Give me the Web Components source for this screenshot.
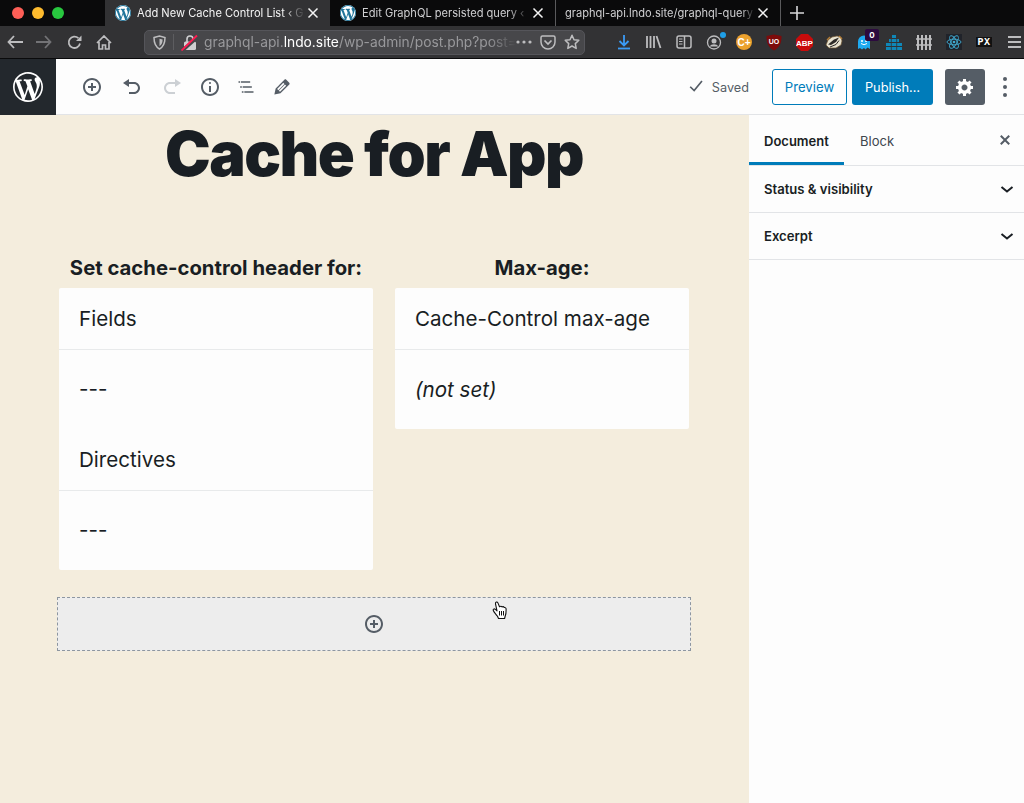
<!DOCTYPE html>
<html>
<head>
<meta charset="utf-8">
<title>Add New Cache Control List</title>
<style>
  html, body { margin: 0; height: 100%; }
  body { width: 1024px; height: 803px; overflow: hidden; font-family: Inter, "Liberation Sans", sans-serif; }
</style>
</head>
<body>
<browser-tabs></browser-tabs>
<browser-toolbar></browser-toolbar>
<editor-shell>
  <editor-header slot="header"></editor-header>
  <editor-canvas slot="canvas">
    <cache-table heading="Set cache-control header for:" slot="left">
      <table-row kind="head">Fields</table-row>
      <table-row>---</table-row>
      <table-row kind="head">Directives</table-row>
      <table-row>---</table-row>
    </cache-table>
    <cache-table heading="Max-age:" slot="right">
      <table-row kind="head">Cache-Control max-age</table-row>
      <table-row style="line-height:79px"><em>(not set)</em></table-row>
    </cache-table>
  </editor-canvas>
  <editor-sidebar slot="sidebar">
    <panel-row>Status &amp; visibility</panel-row>
    <panel-row>Excerpt</panel-row>
  </editor-sidebar>
</editor-shell>
<hand-cursor></hand-cursor>

<script>
const WP_LOGO = "M20 10c0-5.51-4.49-10-10-10C4.48 0 0 4.49 0 10c0 5.52 4.48 10 10 10 5.51 0 10-4.48 10-10zM7.78 15.37L4.37 6.22c.55-.02 1.17-.08 1.17-.08.5-.06.44-1.13-.06-1.11 0 0-1.45.11-2.37.11-.18 0-.37 0-.58-.01C4.12 2.69 6.87 1.11 10 1.11c2.33 0 4.45.87 6.05 2.34-.68-.11-1.65.39-1.65 1.58 0 .74.45 1.36.9 2.1.35.61.55 1.36.55 2.46 0 1.49-1.4 5-1.4 5l-3.03-8.37c.54-.02.82-.17.82-.17.5-.05.44-1.25-.06-1.22 0 0-1.44.12-2.38.12-.87 0-2.33-.12-2.33-.12-.5-.03-.56 1.2-.06 1.22l.92.08 1.26 3.41zM17.41 10c.24-.64.74-1.87.43-4.25.7 1.29 1.05 2.71 1.05 4.25 0 3.29-1.73 6.24-4.4 7.78.97-2.59 1.94-5.2 2.92-7.78zM6.1 18.09C3.12 16.65 1.11 13.53 1.11 10c0-1.3.23-2.48.72-3.59C3.25 10.3 4.67 14.2 6.1 18.09zm4.03-6.63l2.58 6.98c-.86.29-1.76.45-2.71.45-.79 0-1.57-.11-2.29-.33.81-2.38 1.62-4.74 2.42-7.1z";
const INSERT = "M10 1c-5 0-9 4-9 9s4 9 9 9 9-4 9-9-4-9-9-9zm0 16c-3.9 0-7-3.1-7-7s3.1-7 7-7 7 3.1 7 7-3.1 7-7 7zm1-11H9v3H6v2h3v3h2v-3h3V9h-3V6z";
const CLOSE = "M14.95 6.46L11.41 10l3.54 3.54-1.41 1.41L10 11.42l-3.53 3.53-1.42-1.42L8.58 10 5.05 6.47l1.42-1.42L10 8.58l3.54-3.53z";

class browserTabs extends HTMLElement {
  constructor(){
    super();
    this.attachShadow({mode:"open"});
  }
  tab(title, active, width){
    return `
      <div class="tab ${active ? "active" : ""}" style="width:${width}px">
        <svg class="fav" width="16" height="16" viewBox="0 0 20 20"><circle cx="10" cy="10" r="10" fill="#fff"/><path fill="#21759b" d="${WP_LOGO}"/></svg>
        <span class="title">${title}</span>
        <svg class="x" width="12" height="12" viewBox="0 0 12 12"><path d="M1.5 1.5l9 9m0-9l-9 9" stroke="#f4f4f4" stroke-width="1.5" fill="none"/></svg>
      </div>`;
  }
  connectedCallback(){
    this.shadowRoot.innerHTML = `
      <style>
        :host { display:flex; height:26px; background:#0a0a0b; font:400 11.1px Inter, "Liberation Sans", sans-serif; color:#cfcfd1; }
        .lights { width:105px; display:flex; align-items:center; gap:8px; padding-left:12px; box-sizing:border-box; }
        .lights i { width:12px; height:12px; border-radius:50%; display:block; }
        .tab { display:flex; align-items:center; box-sizing:border-box; padding:0 11px 0 10px; }
        .tab.active { background:#323234; color:#f4f4f4; }
        .fav { flex:none; margin-right:6px; }
        .x { flex:none; }
        .title { flex:1; white-space:nowrap; -webkit-mask-image:linear-gradient(90deg,#000 87%,transparent); mask-image:linear-gradient(90deg,#000 87%,transparent); margin-right:2px; }
        .tab.plain { padding-left:9px; border-left:1px solid #5a5a5c; border-right:1px solid #5a5a5c; }
        .plain .title { -webkit-mask-image:linear-gradient(90deg,#000 93%,transparent); mask-image:linear-gradient(90deg,#000 93%,transparent); }
        .plus { width:31px; display:flex; align-items:center; justify-content:center; }
      </style>
      <div class="lights"><i style="background:#fe5f57"></i><i style="background:#febb2e"></i><i style="background:#28c83f"></i></div>
      ${this.tab("Add New Cache Control List ‹ G", true, 225)}
      ${this.tab("Edit GraphQL persisted query ‹", false, 225)}
      <div class="tab plain" style="width:226px">
        <span class="title">graphql-api.lndo.site/graphql-query</span>
        <svg class="x" width="12" height="12" viewBox="0 0 12 12"><path d="M1.5 1.5l9 9m0-9l-9 9" stroke="#f4f4f4" stroke-width="1.5" fill="none"/></svg>
      </div>
      <div class="plus"><svg width="14" height="14" viewBox="0 0 14 14"><path d="M7 0v14M0 7h14" stroke="#d8d8da" stroke-width="1.6"/></svg></div>
    `;
  }
}

class browserToolbar extends HTMLElement {
  constructor(){
    super();
    this.attachShadow({mode:"open"});
  }
  connectedCallback(){
    const g = "#bdbdbf";
    this.shadowRoot.innerHTML = `
      <style>
        :host { display:flex; height:33px; box-sizing:border-box; background:#323234; border-bottom:1px solid #0a0a0b; align-items:center; font-family:Inter, "Liberation Sans", sans-serif; }
        .cell { width:30px; height:32px; display:flex; align-items:center; justify-content:center; flex:none; position:relative; }
        .nav { display:flex; width:119px; margin-right:25px; flex:none; }
        .nav .cell:first-child { width:29px; }
        .url { width:441px; height:25px; box-sizing:border-box; flex:none; background:#47474a; border:1px solid #55555a; border-radius:5px; display:flex; align-items:center; font-size:13.8px; color:#98989b; }
        .url .shield { width:28px; display:flex; align-items:center; justify-content:center; border-right:1px solid #5d5d60; height:16px; flex:none; }
        .url .lock { width:30px; display:flex; justify-content:center; flex:none; }
        .url .text { width:312px; margin-right:-4px; white-space:nowrap; -webkit-mask-image:linear-gradient(90deg,#000 91%,transparent); mask-image:linear-gradient(90deg,#000 91%,transparent); flex:none; }
        .url b { font-weight:400; color:#fff; }
        .url .tail { display:flex; margin-left:auto; align-items:center; padding-right:1px; }
        .url .tail span { width:24px; display:flex; justify-content:center; }
        .ext { display:flex; margin-left:24px; }
        .last { width:25px; padding-left:5px; box-sizing:border-box; }
        .badge { position:absolute; left:16px; top:3px; width:14px; height:12px; background:#2c0a3e; color:#fff; font-size:8px; font-weight:700; border-radius:2px; display:flex; align-items:center; justify-content:center; }
        .t { font-family:"Liberation Sans", sans-serif; font-weight:700; fill:#fff; }
        .m { font-family:"Liberation Mono", monospace; font-weight:700; fill:#fff; }
      </style>
      <div class="nav">
        <div class="cell"><svg width="16" height="14" viewBox="0 0 16 14"><path d="M7 1L1.5 7 7 13M1.5 7H16" stroke="${g}" stroke-width="1.8" fill="none"/></svg></div>
        <div class="cell"><svg width="16" height="14" viewBox="0 0 16 14"><path d="M9 1l5.5 6L9 13M14.5 7H0" stroke="#737376" stroke-width="1.8" fill="none"/></svg></div>
        <div class="cell"><svg width="15" height="15" viewBox="0 0 15 15"><path d="M13 8.500A5.700 5.700 0 1 1 11.400 3.200" stroke="${g}" stroke-width="1.8" fill="none"/><path d="M14.500 .5V6H9z" fill="${g}"/></svg></div>
        <div class="cell"><svg width="16" height="15" viewBox="0 0 16 15"><path d="M1 8l7-7 7 7M3 7v7h3.500v-4h3v4H13V7" stroke="${g}" stroke-width="1.7" fill="none"/></svg></div>
      </div>
      <div class="url">
        <span class="shield"><svg width="13" height="15" viewBox="0 0 13 15"><path d="M1 2.500L6.500 1 12 2.500c0 5-1 9-5.500 11.500C2 11.500 1 7.500 1 2.500z" stroke="${g}" stroke-width="1.5" fill="none"/><path d="M6.500 3.800L9.600 4.600c0 3-.6 5-3.100 6.600z" fill="${g}"/></svg></span>
        <span class="lock"><svg width="17" height="17" viewBox="0 0 17 17"><rect x="3" y="7.500" width="12" height="8.500" rx="1.500" fill="#cfcfd1"/><path d="M6 8V5a3 3 0 0 1 6 0v3" stroke="#cfcfd1" stroke-width="1.6" fill="none"/><path d="M2 16L16.500 3" stroke="#47474a" stroke-width="3.500"/><path d="M.5 16.500L16 1.500" stroke="#ff1a50" stroke-width="1.8"/></svg></span>
        <span class="text">graphql-api.<b>lndo.site</b>/wp-admin/post.php?post=</span>
        <span class="tail">
          <span><svg width="16" height="4" viewBox="0 0 16 4"><circle cx="2" cy="2" r="1.600" fill="${g}"/><circle cx="8" cy="2" r="1.600" fill="${g}"/><circle cx="14" cy="2" r="1.600" fill="${g}"/></svg></span>
          <span><svg width="16" height="15" viewBox="0 0 16 15"><path d="M2.500 1h11A1.500 1.500 0 0 1 15 2.500V7a7 7 0 0 1-14 0V2.500A1.500 1.500 0 0 1 2.500 1z" stroke="${g}" stroke-width="1.5" fill="none"/><path d="M4.500 5.500L8 9l3.500-3.500" stroke="${g}" stroke-width="1.7" fill="none"/></svg></span>
          <span><svg width="16" height="16" viewBox="0 0 16 16"><path d="M8 1.300l2 4.400 4.800.6-3.500 3.300.9 4.800L8 12l-4.200 2.400.9-4.800L1.200 6.300 6 5.700z" stroke="${g}" stroke-width="1.5" fill="none" stroke-linejoin="round"/></svg></span>
        </span>
      </div>
      <div class="ext">
        <div class="cell"><svg width="14" height="16" viewBox="0 0 14 16"><path d="M7 1v10M2.500 7L7 11.500 11.500 7" stroke="#3b9bf5" stroke-width="1.8" fill="none"/><path d="M1 14.500h12" stroke="#3b9bf5" stroke-width="1.8"/></svg></div>
        <div class="cell"><svg width="16" height="14" viewBox="0 0 16 14"><path d="M1 1v12M4.500 1v12M8 1v12M10.500 1l4 12" stroke="${g}" stroke-width="1.8" fill="none"/></svg></div>
        <div class="cell"><svg width="16" height="14" viewBox="0 0 16 14"><rect x="1" y="1" width="14" height="12" rx="2" stroke="${g}" stroke-width="1.5" fill="none"/><path d="M8.500 1v12" stroke="${g}" stroke-width="1.5"/><path d="M3 4h3.500M3 6.500h3.500M3 9h3.500" stroke="${g}" stroke-width="1"/></svg></div>
        <div class="cell"><svg width="26" height="24" viewBox="0 0 26 24"><circle cx="13" cy="12.500" r="6.500" stroke="${g}" stroke-width="1.300" fill="none"/><circle cx="13" cy="11" r="2.500" fill="${g}"/><path d="M8.500 16.500a5 4 0 0 1 9 0z" fill="${g}"/><circle cx="22" cy="5" r="3" fill="#1f9fe8"/></svg></div>
        <div class="cell"><svg width="16" height="16" viewBox="0 0 16 16"><circle cx="8" cy="8" r="8" fill="#eba12e"/><text class="t" x="8" y="11.500" font-size="10" text-anchor="middle">C+</text></svg></div>
        <div class="cell"><svg width="16" height="17" viewBox="0 0 16 17"><path d="M.5 2L8 .5 15.500 2c0 7-1.500 11-7.500 14.500C2 13 .5 9 .5 2z" fill="#7d0b0b"/><text class="t" x="8" y="9.500" font-size="7" text-anchor="middle">UO</text></svg></div>
        <div class="cell"><svg width="17" height="17" viewBox="0 0 17 17"><path d="M5 0h7l5 5v7l-5 5H5l-5-5V5z" fill="#c80c0c"/><text class="t" x="8.500" y="11.500" font-size="8" text-anchor="middle">ABP</text></svg></div>
        <div class="cell"><svg width="18" height="14" viewBox="0 0 18 14"><path d="M1 10l2-5 4-3 5-1 4 1 1 4-1 4-5 3H4z" fill="#e8e2d0" stroke="#6d5330" stroke-width=".7"/><path d="M3 9.500L9 4.500l5-2L11 7l-5 3z" fill="#2d2a28"/><path d="M5 12l6-2.500 3-4" stroke="#2d2a28" stroke-width="1" fill="none"/><path d="M2 5l3-3M14 1l3 3" stroke="#b07a36" stroke-width="1.4"/></svg></div>
        <div class="cell"><svg width="14" height="15" viewBox="0 0 14 15"><path d="M1 6.500a6 6 0 0 1 12 0V14l-2.500-1.500L8.500 14.500 7 13l-2 1.500L3 13l-2 1z" fill="#1eaaf1"/><circle cx="5" cy="6" r="1" fill="#fff"/><circle cx="9" cy="6" r="1" fill="#fff"/><path d="M4 8.500q3 2.500 6 0" stroke="#fff" fill="none"/></svg><span class="badge">0</span></div>
        <div class="cell"><svg width="16" height="15" viewBox="0 0 16 15" fill="#0f87b8"><rect x="6" y="0" width="4" height="3"/><rect x="3" y="4" width="10" height="3"/><rect x="0" y="8" width="16" height="3"/><rect x="0" y="12" width="16" height="3"/><path d="M5.300 4v11M10.700 4v11" stroke="#323234" stroke-width=".8"/></svg></div>
        <div class="cell"><svg width="16" height="15" viewBox="0 0 16 15"><path d="M2 0v15M6 0v15M10 0v15M14 0v15" stroke="${g}" stroke-width="2"/><path d="M0 4h16M0 10h16" stroke="${g}" stroke-width="1.400"/></svg></div>
        <div class="cell"><svg width="16" height="16" viewBox="0 0 16 16"><rect width="16" height="16" fill="#20232a"/><g fill="none" stroke="#3fa9cf" stroke-width=".9"><ellipse cx="8" cy="8" rx="7" ry="2.800"/><ellipse cx="8" cy="8" rx="7" ry="2.800" transform="rotate(60 8 8)"/><ellipse cx="8" cy="8" rx="7" ry="2.800" transform="rotate(120 8 8)"/></g><circle cx="8" cy="8" r="1.300" fill="#3fa9cf"/></svg></div>
        <div class="cell"><svg width="16" height="10" viewBox="0 0 16 10"><rect width="16" height="10" fill="#111"/><text class="m" x="8" y="8.300" font-size="10" text-anchor="middle" letter-spacing=".5">PX</text></svg></div>
        <div class="cell last"><svg width="13" height="12" viewBox="0 0 13 12"><path d="M0 1h13M0 6h13M0 11h13" stroke="${g}" stroke-width="1.8"/></svg></div>
      </div>
    `;
  }
}

class editorShell extends HTMLElement {
  constructor(){
    super();
    this.attachShadow({mode:"open"});
  }
  connectedCallback(){
    this.shadowRoot.innerHTML = `
      <style>
        :host { display:grid; grid-template-columns:749px 275px; grid-template-rows:56px 688px; background:#f4eddd; }
        ::slotted([slot=header]) { grid-column:1 / 3; }
      </style>
      <slot name="header"></slot>
      <slot name="canvas"></slot>
      <slot name="sidebar"></slot>
    `;
  }
}

class editorHeader extends HTMLElement {
  constructor(){
    super();
    this.attachShadow({mode:"open"});
  }
  icon(path, box, color, size){
    const s = size || 20;
    return `<svg width="${s}" height="${s}" viewBox="0 0 ${box} ${box}" fill="${color || "#555d66"}"><path d="${path}"/></svg>`;
  }
  connectedCallback(){
    this.shadowRoot.innerHTML = `
      <style>
        :host { display:flex; align-items:center; height:56px; background:#fdfdfd; box-shadow:inset 0 -1px 0 #e2e4e7; font-family:Inter, "Liberation Sans", sans-serif; font-size:13px; }
        .logo { width:56px; height:56px; background:#23282d; display:flex; align-items:center; justify-content:center; flex:none; }
        .tools { display:flex; margin-left:16px; }
        .tools span { width:40px; height:36px; display:flex; align-items:center; justify-content:center; }
        .tools span.tight { width:36px; }
        .right { margin-left:auto; display:flex; align-items:center; }
        .saved { color:#555d66; display:flex; align-items:center; margin-right:23px; font-size:12.7px; }
        .saved svg { margin-right:5px; }
        .btn { height:36px; box-sizing:border-box; border-radius:3px; display:flex; align-items:center; justify-content:center; font-size:13.2px; }
        .preview { width:75px; border:1px solid #007cba; color:#007cba; background:#fff; margin-right:5px; }
        .publish { width:81px; background:#007cba; color:#fff; margin-right:12px; font-size:12.8px; }
        .gear { width:40px; background:#555d66; }
        .more { width:39px; display:flex; justify-content:center; }
      </style>
      <div class="logo"><svg width="30" height="30" viewBox="0 0 20 20" fill="#fff"><path d="${WP_LOGO}"/></svg></div>
      <div class="tools">
        <span>${this.icon(INSERT, 20)}</span>
        <span>${this.icon("M12 5H7V2L1 6l6 4V7h5c2.200 0 4 1.800 4 4s-1.800 4-4 4H7v2h5c3.300 0 6-2.700 6-6s-2.700-6-6-6z", 20)}</span>
        <span>${this.icon("M8 5h5V2l6 4-6 4V7H8c-2.200 0-4 1.800-4 4s1.800 4 4 4h5v2H8c-3.300 0-6-2.700-6-6s2.700-6 6-6z", 20, "#ccd0d4")}</span>
        <span class="tight">${this.icon("M9 15h2V9H9v6zm1-10c-.5 0-1 .5-1 1s.5 1 1 1 1-.5 1-1-.5-1-1-1zm0-4c-5 0-9 4-9 9s4 9 9 9 9-4 9-9-4-9-9-9zm0 16c-3.900 0-7-3.100-7-7s3.100-7 7-7 7 3.100 7 7-3.100 7-7 7z", 20)}</span>
        <span class="tight">${this.icon("M5 5H3v2h2V5zm3 8h11v-2H8v2zm9-8H6v2h11V5zM7 11H5v2h2v-2zm0 8h2v-2H7v2zm3-2v2h11v-2H10z", 24)}</span>
        <span class="tight">${this.icon("M13.890 3.390l2.710 2.720c.46.46.42 1.240.03 1.640l-8.010 8.020-5.560 1.160 1.160-5.580s7.600-7.630 7.990-8.030c.39-.39 1.220-.39 1.680.07zm-2.730 2.790l-5.590 5.610 1.110 1.110 5.540-5.650zm-2.970 8.230l5.580-5.600-1.070-1.080-5.590 5.600z", 20, null, 22)}</span>
      </div>
      <div class="right">
        <span class="saved"><svg width="24" height="24" viewBox="0 0 20 20" fill="none" stroke="#555d66" stroke-width="1.400"><path d="M6 9.800l3.300 3.200L15.800 5"/></svg>Saved</span>
        <span class="btn preview">Preview</span>
        <span class="btn publish">Publish…</span>
        <span class="btn gear"><svg width="20" height="20" viewBox="0 0 20 20" fill="#fff"><path d="M18 12h-2.180c-.17.7-.44 1.350-.81 1.930l1.540 1.540-2.100 2.100-1.540-1.540c-.58.36-1.230.63-1.910.79V19H8v-2.180c-.68-.16-1.330-.43-1.910-.79l-1.540 1.540-2.120-2.120 1.540-1.540c-.36-.58-.63-1.230-.79-1.910H1V9.030h2.170c.16-.7.44-1.350.8-1.940L2.430 5.550l2.100-2.100 1.540 1.540c.58-.37 1.240-.64 1.930-.81V2h3v2.180c.68.16 1.330.43 1.910.79l1.540-1.540 2.120 2.120-1.540 1.540c.36.59.64 1.240.8 1.940H18V12zm-8.500 1.500c1.660 0 3-1.340 3-3s-1.340-3-3-3-3 1.340-3 3 1.340 3 3 3z"/></svg></span>
        <span class="more"><svg width="4" height="20" viewBox="0 0 4 20" fill="#555d66"><circle cx="2" cy="2" r="2"/><circle cx="2" cy="10" r="2"/><circle cx="2" cy="18" r="2"/></svg></span>
      </div>
    `;
  }
}

class editorCanvas extends HTMLElement {
  constructor(){
    super();
    this.attachShadow({mode:"open"});
  }
  connectedCallback(){
    this.shadowRoot.innerHTML = `
      <style>
        :host { display:block; box-sizing:border-box; padding:0 58px 0 57px; font-family:Inter, "Liberation Sans", sans-serif; color:#191e23; }
        h1 { margin:0; height:141px; font-size:61.2px; line-height:78px; font-weight:900; text-align:center; letter-spacing:-1.5px; white-space:nowrap; }
        .cols { display:grid; grid-template-columns:314px 294px; gap:22px; margin:0 2px; align-items:start; }
        .appender { margin-top:27px; height:54px; box-sizing:border-box; border:1px dashed #8d96a0; background:#ededed; display:flex; align-items:center; justify-content:center; }
      </style>
      <h1>Cache for App</h1>
      <div class="cols">
        <slot name="left"></slot>
        <slot name="right"></slot>
      </div>
      <div class="appender"><svg width="20" height="20" viewBox="0 0 20 20" fill="#555d66"><path d="${INSERT}"/></svg></div>
    `;
  }
}

class cacheTable extends HTMLElement {
  constructor(){
    super();
    this.attachShadow({mode:"open"});
  }
  connectedCallback(){
    this.shadowRoot.innerHTML = `
      <style>
        :host { display:block; }
        .heading { height:32px; font-size:20.3px; line-height:24px; font-weight:700; text-align:center; white-space:nowrap; }
        .card { background:#fdfdfd; border-radius:2px; }
      </style>
      <div class="heading">${this.getAttribute("heading")}</div>
      <div class="card"><slot></slot></div>
    `;
  }
}

class tableRow extends HTMLElement {
  constructor(){
    super();
    this.attachShadow({mode:"open"});
  }
  connectedCallback(){
    this.shadowRoot.innerHTML = `
      <style>
        :host { display:block; box-sizing:border-box; padding:0 20px; font-size:20.6px; color:#191e23; white-space:nowrap; }
        :host([kind=head]) { height:62px; line-height:61px; border-bottom:1px solid #e8eaeb; }
        :host(:not([kind=head])) { height:79px; line-height:77px; }
      </style>
      <slot></slot>
    `;
  }
}

class editorSidebar extends HTMLElement {
  constructor(){
    super();
    this.attachShadow({mode:"open"});
  }
  connectedCallback(){
    this.shadowRoot.innerHTML = `
      <style>
        :host { display:block; background:#fdfdfd; font-family:Inter, "Liberation Sans", sans-serif; font-size:13px; color:#191e23; }
        .tabs { height:51px; box-sizing:border-box; border-bottom:1px solid #e2e4e7; display:flex; align-items:stretch; }
        .tab { display:flex; align-items:center; box-sizing:border-box; height:50px; }
        .on { width:95px; padding-left:15px; font-weight:600; border-bottom:3px solid #007cba; padding-top:5px; }
        .off { padding-left:16px; color:#40464d; padding-top:2px; }
        .close { margin-left:auto; width:37px; display:flex; align-items:center; justify-content:center; padding-right:1px; box-sizing:border-box; }
      </style>
      <div class="tabs">
        <div class="tab on">Document</div>
        <div class="tab off">Block</div>
        <div class="close"><svg width="20" height="20" viewBox="0 0 20 20" fill="#555d66"><path d="${CLOSE}"/></svg></div>
      </div>
      <slot></slot>
    `;
  }
}

class panelRow extends HTMLElement {
  constructor(){
    super();
    this.attachShadow({mode:"open"});
  }
  connectedCallback(){
    this.shadowRoot.innerHTML = `
      <style>
        :host { display:flex; align-items:center; justify-content:space-between; height:47px; box-sizing:border-box; padding:0 5px 0 15px; border-bottom:1px solid #e2e4e7; font-weight:600; font-size:13.1px; }
      </style>
      <slot></slot>
      <svg width="24" height="24" viewBox="0 0 24 24" fill="none" stroke="#191e23" stroke-width="2"><path d="M6.500 10l5.500 4.500 5.500-4.500"/></svg>
    `;
  }
}

class handCursor extends HTMLElement {
  constructor(){
    super();
    this.attachShadow({mode:"open"});
  }
  connectedCallback(){
    this.shadowRoot.innerHTML = `
      <style>
        :host { position:absolute; left:492px; top:600px; width:16px; height:20px; display:block; }
      </style>
      <svg width="16" height="20" viewBox="0 0 16 20"><path d="M3.500 3.800c-.2-1.800 1.700-2.500 2.400-.9l1.600 3.800c.9-.6 2-.6 2.600.2.800-.4 1.700-.2 2.200.6 1-.2 1.800.5 1.800 1.500 0 2.500.2 4.800-.9 7l-.6 2.500H6.500l-1-2.200C4 14 2 12.500 1.300 10.500c-.5-1.300.8-2 1.800-1.300l1.900 1.700z" fill="#fff" stroke="#111" stroke-width="1.100" stroke-linejoin="round"/><path d="M7.500 11v4.500M9.500 11v4.500M11.500 11v4.500" stroke="#111" stroke-width="1"/></svg>
    `;
  }
}

customElements.define("browser-tabs", browserTabs);
customElements.define("browser-toolbar", browserToolbar);
customElements.define("editor-shell", editorShell);
customElements.define("editor-header", editorHeader);
customElements.define("editor-canvas", editorCanvas);
customElements.define("cache-table", cacheTable);
customElements.define("table-row", tableRow);
customElements.define("editor-sidebar", editorSidebar);
customElements.define("panel-row", panelRow);
customElements.define("hand-cursor", handCursor);
</script>
</body>
</html>
